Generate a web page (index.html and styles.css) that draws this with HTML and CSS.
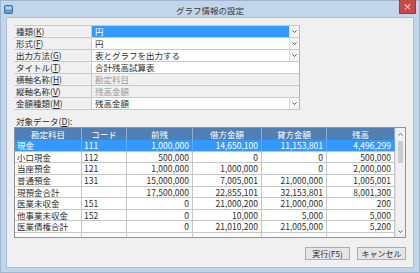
FILE: index.html
```html
<!DOCTYPE html>
<html lang="ja">
<head>
<meta charset="utf-8">
<link rel="stylesheet" href="styles.css">
</head>
<body>
<div class="window">
  <div class="titlebar">
    <svg class="app-icon" width="9" height="9" viewBox="0 0 9 9">
      <rect x="0.5" y="0.5" width="8" height="8" rx="1" fill="#5a9bd0" stroke="#3a6f9e"/>
      <rect x="1.5" y="1.5" width="6" height="3" fill="#a9d3f2"/>
    </svg>
    <span class="title">グラフ情報の設定</span>
    <div class="close">×</div>
  </div>
  <div class="client">
    <div class="props">
      <div class="plabel">種類(<u>K</u>)</div>
      <div class="pvalue selected"><span class="ptext">円</span><span class="dd"><svg width="5" height="3" viewBox="0 0 5 3"><path d="M0.5 0.5 L2.5 2.5 L4.5 0.5" fill="none" stroke="#555" stroke-width="1"/></svg></span></div>
      <div class="plabel">形式(<u>F</u>)</div>
      <div class="pvalue"><span class="ptext">円</span><span class="dd"><svg width="5" height="3" viewBox="0 0 5 3"><path d="M0.5 0.5 L2.5 2.5 L4.5 0.5" fill="none" stroke="#555" stroke-width="1"/></svg></span></div>
      <div class="plabel">出力方法(<u>G</u>)</div>
      <div class="pvalue"><span class="ptext">表とグラフを出力する</span><span class="dd"><svg width="5" height="3" viewBox="0 0 5 3"><path d="M0.5 0.5 L2.5 2.5 L4.5 0.5" fill="none" stroke="#555" stroke-width="1"/></svg></span></div>
      <div class="plabel">タイトル(<u>T</u>)</div>
      <div class="pvalue"><span class="ptext">合計残高試算表</span></div>
      <div class="plabel">横軸名称(<u>H</u>)</div>
      <div class="pvalue disabled"><span class="ptext">勘定科目</span></div>
      <div class="plabel">縦軸名称(<u>V</u>)</div>
      <div class="pvalue disabled"><span class="ptext">残高金額</span></div>
      <div class="plabel">金額種類(<u>M</u>)</div>
      <div class="pvalue"><span class="ptext">残高金額</span><span class="dd"><svg width="5" height="3" viewBox="0 0 5 3"><path d="M0.5 0.5 L2.5 2.5 L4.5 0.5" fill="none" stroke="#555" stroke-width="1"/></svg></span></div>
    </div>

    <div class="data-label">対象データ(<u>D</u>):</div>

    <div class="table-box">
      <div class="grid">
        <div class="hc">勘定科目</div><div class="hc">コード</div><div class="hc">前残</div><div class="hc">借方金額</div><div class="hc">貸方金額</div><div class="hc">残高</div>

        <div class="c sel">現金</div><div class="c sel">111</div><div class="c num sel">1,000,000</div><div class="c num sel">14,650,100</div><div class="c num sel">11,153,801</div><div class="c num sel">4,496,299</div>

        <div class="c">小口現金</div><div class="c">112</div><div class="c num">500,000</div><div class="c num">0</div><div class="c num">0</div><div class="c num">500,000</div>

        <div class="c">当座預金</div><div class="c">121</div><div class="c num">1,000,000</div><div class="c num">1,000,000</div><div class="c num">0</div><div class="c num">2,000,000</div>

        <div class="c">普通預金</div><div class="c">131</div><div class="c num">15,000,000</div><div class="c num">7,005,001</div><div class="c num">21,000,000</div><div class="c num">1,005,001</div>

        <div class="c">現預金合計</div><div class="c"></div><div class="c num">17,500,000</div><div class="c num">22,855,101</div><div class="c num">32,153,801</div><div class="c num">8,001,300</div>

        <div class="c">医業未収金</div><div class="c">151</div><div class="c num">0</div><div class="c num">21,000,200</div><div class="c num">21,000,000</div><div class="c num">200</div>

        <div class="c">他事業未収金</div><div class="c">152</div><div class="c num">0</div><div class="c num">10,000</div><div class="c num">5,000</div><div class="c num">5,000</div>

        <div class="c">医業債権合計</div><div class="c"></div><div class="c num">0</div><div class="c num">21,010,200</div><div class="c num">21,005,000</div><div class="c num">5,200</div>

        <div class="c"></div><div class="c"></div><div class="c"></div><div class="c"></div><div class="c"></div><div class="c"></div>
      </div>
      <div class="vscroll">
        <div class="sbtn"><svg width="5" height="3" viewBox="0 0 5 3"><path d="M0.5 2.5 L2.5 0.5 L4.5 2.5" fill="none" stroke="#606060" stroke-width="1"/></svg></div>
        <div class="track"><div class="thumb"></div></div>
        <div class="sbtn"><svg width="5" height="3" viewBox="0 0 5 3"><path d="M0.5 0.5 L2.5 2.5 L4.5 0.5" fill="none" stroke="#606060" stroke-width="1"/></svg></div>
      </div>
    </div>

    <div class="buttons">
      <div class="btn">実行(F5)</div>
      <div class="btn">キャンセル</div>
    </div>
  </div>
</div>
</body>
</html>
```

FILE: styles.css
```css
* { box-sizing: border-box; }
html, body { margin: 0; padding: 0; }
body {
  width: 420px;
  height: 273px;
  overflow: hidden;
  font-family: "Noto Sans CJK JP", "Noto Sans", sans-serif;
  font-size: 8.5px;
  color: #2e2e2e;
  background: #c2d5ea;
}
u { text-decoration: underline; text-underline-offset: 1px; }

.window {
  width: 420px;
  height: 273px;
  display: flex;
  flex-direction: column;
  background: #c2d5ea;
  border: 1px solid #9fb6d0;
}
.titlebar {
  height: 16px;
  flex: none;
  position: relative;
  display: flex;
  align-items: center;
  justify-content: center;
}
.app-icon { position: absolute; left: 3px; top: 4px; }
.title { font-size: 8.5px; color: #3a3a3a; margin-top: 1px; }
.close {
  position: absolute;
  right: 3px;
  top: -1px;
  width: 17px;
  height: 14px;
  background: #c94a45;
  color: #fff;
  font-size: 9px;
  line-height: 13px;
  text-align: center;
  border: 1px solid #9e3b37;
  border-top: none;
}

.client {
  flex: 1;
  margin: 0 5px 4px 5px;
  background: #f0f0f0;
  border: 1px solid #a9bdd4;
  padding: 7px 7px 0 7px;
  display: flex;
  flex-direction: column;
}

.props {
  width: 286px;
  display: grid;
  grid-template-columns: 78px 208px;
  grid-auto-rows: 12px;
  border-top: 1px solid #c9c9c9;
}
.plabel {
  padding-left: 2px;
  line-height: 11px;
  border-bottom: 1px solid #c9c9c9;
  border-right: 1px solid #c9c9c9;
  white-space: nowrap;
}
.pvalue {
  display: flex;
  background: #fff;
  border-bottom: 1px solid #c9c9c9;
  border-right: 1px solid #b4b4b4;
}
.ptext {
  flex: 1;
  padding-left: 3px;
  line-height: 11px;
  white-space: nowrap;
}
.pvalue.selected .ptext { background: #3399ff; color: #fff; }
.pvalue.disabled { background: #f0f0f0; color: #9a9a9a; }
.dd {
  width: 10px;
  flex: none;
  background: #f4f4f4;
  border-left: 1px solid #dcdcdc;
  display: flex;
  align-items: center;
  justify-content: center;
}

.data-label {
  margin-top: 6px;
  padding-left: 2px;
  line-height: 10px;
  height: 10px;
}

.table-box {
  margin-top: 1px;
  width: 392px;
  height: 111px;
  flex: none;
  border: 1px solid #8f949b;
  display: flex;
  overflow: hidden;
  background: #fff;
}
.grid {
  width: 380px;
  flex: none;
  display: grid;
  grid-template-columns: 67px 45px 66px 69px 65px 68px;
  grid-template-rows: 12px;
  grid-auto-rows: 11.65px;
  align-content: start;
}
.hc {
  background: #4f7fb3;
  color: #fff;
  text-align: center;
  line-height: 12px;
  border-right: 1px solid #8fb0d2;
  white-space: nowrap;
}
.c {
  border-right: 1px solid #c6c6c6;
  border-bottom: 1px solid #c6c6c6;
  padding: 0 2px;
  line-height: 11px;
  white-space: nowrap;
  overflow: hidden;
}
.c.num { text-align: right; padding-right: 3px; }
.c.sel { background: #3399ff; color: #fff; border-right-color: #5aaeff; }

.vscroll {
  flex: 1;
  display: flex;
  flex-direction: column;
  background: #f0f0f0;
  border-left: 1px solid #e2e2e2;
}
.sbtn {
  height: 12px;
  flex: none;
  display: flex;
  align-items: center;
  justify-content: center;
}
.track { flex: 1; padding: 1px 1px; }
.thumb {
  height: 22px;
  background: #cdcdcd;
  margin: 0 1px;
}

.buttons {
  display: flex;
  justify-content: flex-end;
  gap: 7px;
  margin-top: 9px;
}
.btn {
  height: 13px;
  background: #e5e5e5;
  border: 1px solid #adadad;
  line-height: 11px;
  text-align: center;
  font-size: 8px;
}
.btn:first-child { width: 45px; }
.btn:last-child { width: 49px; }
```
